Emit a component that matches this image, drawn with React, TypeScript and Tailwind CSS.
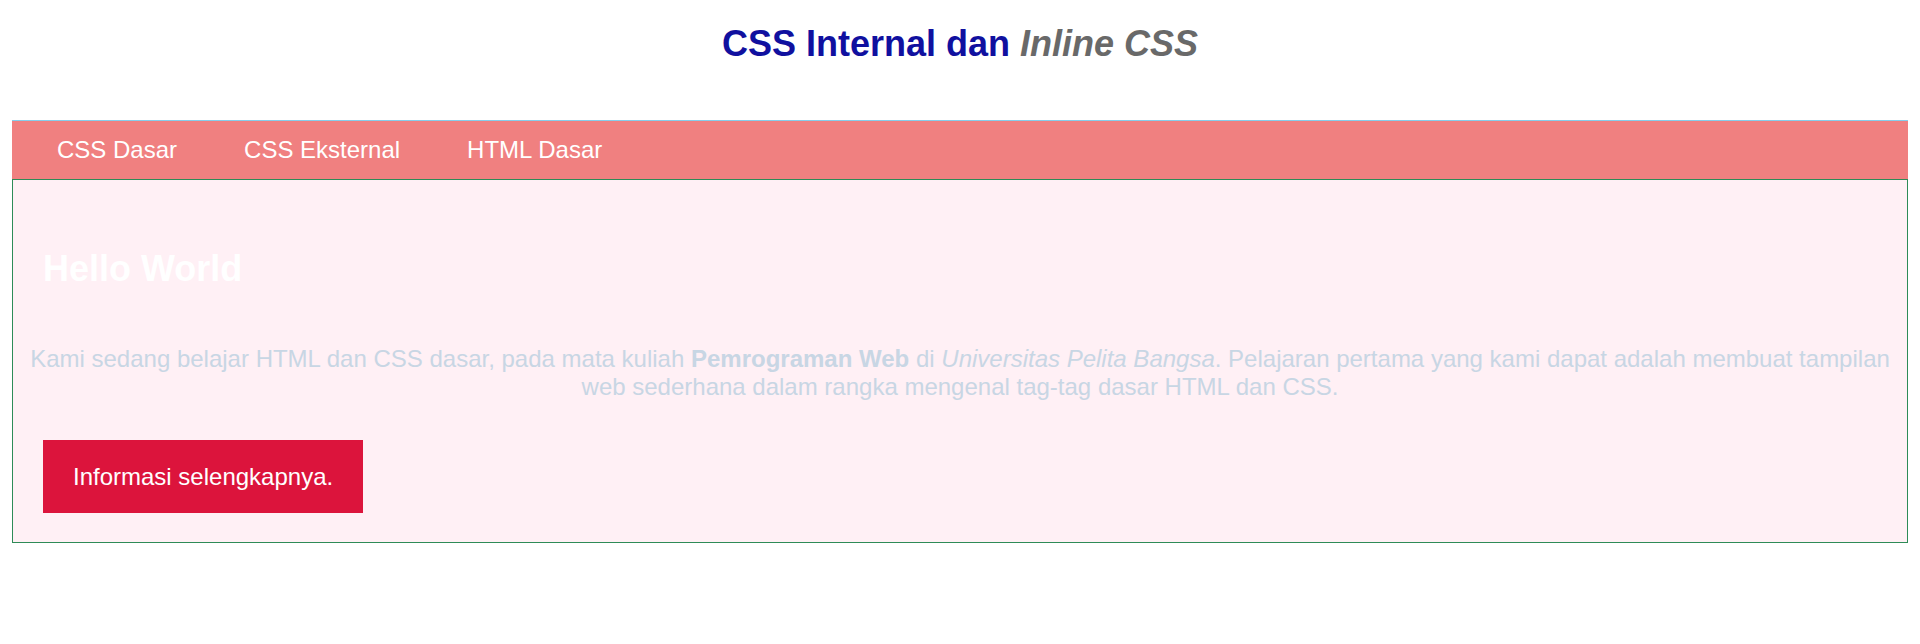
export default function App() {
  const links = ["CSS Dasar", "CSS Eksternal", "HTML Dasar"];

  return (
    <div className="min-h-screen bg-white font-['Liberation_Sans',Arial,sans-serif]">
      <h1 className="pt-[23px] text-center text-[36px] font-bold leading-[41px]">
        <span className="text-[#10109f]">CSS Internal dan </span>
        <i className="text-[#696969]">Inline CSS</i>
      </h1>

      <div className="mx-[12px] mt-[56px]">
        {/* navigation bar */}
        <nav className="flex h-[59px] items-center gap-[67px] border-t border-[#87ceeb] bg-[#f08080] pl-[45px] text-[24px] leading-[28px] text-white">
          {links.map((label) => (
            <a key={label} href="#">
              {label}
            </a>
          ))}
        </nav>

        {/* content box */}
        <div className="border border-[#2e8b57] bg-[#fff0f5] pb-[29px]">
          <h2 className="mt-[68px] pl-[30px] text-[36px] font-bold leading-[41px] text-white">
            Hello World
          </h2>
          <p className="mt-[56px] px-[8px] text-center text-[24px] leading-[27.6px] text-[#c8d6e4]">
            Kami sedang belajar HTML dan CSS dasar, pada mata kuliah <b>Pemrograman Web</b> di{" "}
            <i>Universitas Pelita Bangsa</i>. Pelajaran pertama yang kami dapat adalah membuat
            tampilan web sederhana dalam rangka mengenal tag-tag dasar HTML dan CSS.
          </p>
          <div className="mt-[40px] pl-[30px]">
            <button className="h-[73px] bg-[#dc143c] px-[30px] text-[24px] leading-[28px] text-white">
              Informasi selengkapnya.
            </button>
          </div>
        </div>
      </div>
    </div>
  );
}
